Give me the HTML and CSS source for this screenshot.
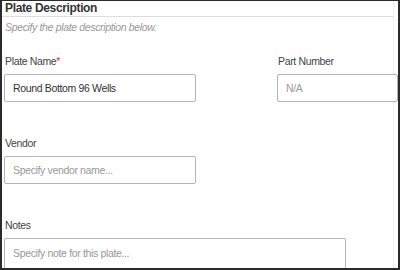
FILE: index.html
```html
<!DOCTYPE html>
<html>
<head>
<meta charset="utf-8">
<link rel="stylesheet" href="styles.css">
</head>
<body>
<div class="frame">
  <div class="panel">
    <div class="header">Plate Description</div>
    <div class="subtitle">Specify the plate description below.</div>
    <div class="row">
      <div class="field name">
        <label class="label">Plate Name<span class="req">*</span></label>
        <input class="input" type="text" value="Round Bottom 96 Wells">
      </div>
      <div class="field part">
        <label class="label">Part Number</label>
        <input class="input" type="text" placeholder="N/A">
      </div>
    </div>
    <div class="row">
      <div class="field name">
        <label class="label">Vendor</label>
        <input class="input" type="text" placeholder="Specify vendor name...">
      </div>
    </div>
    <div class="row">
      <div class="field notes">
        <label class="label">Notes</label>
        <textarea class="input area" placeholder="Specify note for this plate..."></textarea>
      </div>
    </div>
  </div>
</div>
</body>
</html>
```
FILE: styles.css
```css
html, body {
  margin: 0;
  padding: 0;
  background: #fff;
}
.frame {
  width: 400px;
  height: 270px;
  box-sizing: border-box;
  border-style: solid;
  border-color: #2b2b2b;
  border-width: 1px 2px 2px 2px;
  overflow: hidden;
  font-family: "Liberation Sans", Arial, sans-serif;
  font-size: 10.5px;
  letter-spacing: -0.35px;
  color: #444;
}
.panel {
  width: 392px;
  height: 100%;
  box-sizing: border-box;
  border-right: 1px solid #f0f0f0;
  padding-left: 2px;
}
.header {
  height: 15px;
  border-bottom: 1px solid #ddd;
  margin-left: -2px;
  padding-left: 3px;
  font-size: 12px;
  font-weight: bold;
  line-height: 14px;
  color: #333;
}
.subtitle {
  margin-top: 4px;
  padding-left: 1px;
  font-style: italic;
  color: #999;
  line-height: 13px;
}
.row {
  display: flex;
  gap: 81px;
  margin-top: 21px;
}
.row + .row {
  margin-top: 35px;
}
.field {
  display: flex;
  flex-direction: column;
  gap: 6px;
}
.label {
  line-height: 13px;
  padding-left: 1px;
  color: #444;
}
.req {
  color: #d9363e;
}
.input {
  box-sizing: border-box;
  height: 28px;
  border: 1px solid #b5b5b5;
  border-radius: 2px;
  padding: 0 8px;
  font-family: "Liberation Sans", Arial, sans-serif;
  font-size: 10.5px;
  letter-spacing: -0.35px;
  color: #333;
  background: #fff;
  outline: none;
  margin: 0;
}
.input::placeholder {
  color: #999;
}
.name .input {
  width: 192px;
}
.part .input {
  width: 121px;
}
.notes .input {
  width: 342px;
}
.area {
  height: 40px;
  padding: 8px 8px;
  line-height: 13px;
  resize: none;
  display: block;
}
```
